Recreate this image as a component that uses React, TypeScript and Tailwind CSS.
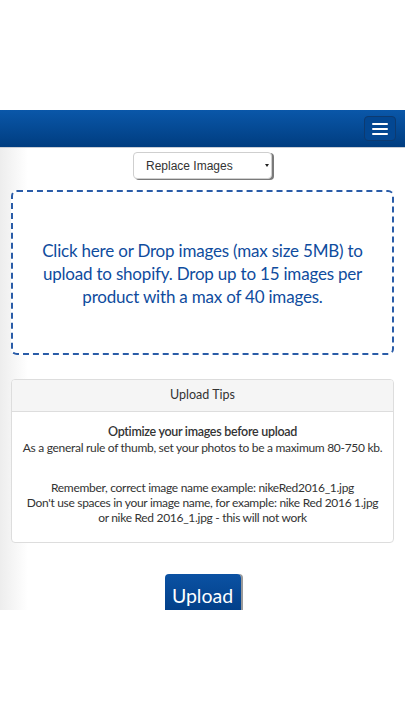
const ubuntuLike = { fontFamily: "Lato, 'Noto Sans', sans-serif" };

function NavBar() {
  return (
    <div className="h-[38px] flex items-center justify-end pr-[9px] bg-[linear-gradient(to_bottom,#0a57a9,#003d80)] border-b border-[#c9ced6]">
      <div className="w-[32px] h-[25px] rounded-[4px] border border-[#0d3a70] bg-[#034792] flex flex-col items-center justify-center gap-[3px]">
        <span className="block w-[16px] h-[2px] bg-white rounded-sm" />
        <span className="block w-[16px] h-[2px] bg-white rounded-sm" />
        <span className="block w-[16px] h-[2px] bg-white rounded-sm" />
      </div>
    </div>
  );
}

function Select() {
  return (
    <div className="mx-auto w-[139px] h-[27px] rounded-[4px] border border-[#cfcfcf] bg-white shadow-[2px_1px_0_#7a7a7a] flex items-center pl-[12px] pr-[2px]">
      <span className="text-[12px] text-[#333] flex-1" style={{ fontFamily: "'Liberation Sans', Arial, sans-serif" }}>
        Replace Images
      </span>
      <span className="block w-0 h-0 border-l-[2.5px] border-r-[2.5px] border-t-[3px] border-l-transparent border-r-transparent border-t-[#222]" />
    </div>
  );
}

export default function App() {
  return (
    <div className="w-[405px] h-[720px] bg-white overflow-hidden" style={ubuntuLike}>
      <div className="h-[110px]" />
      <NavBar />
      <div className="h-[462px] overflow-hidden px-[11px] pt-[4px] bg-[linear-gradient(to_right,#ededed_0px,#ffffff_28px)]">
        <Select />
        <div className="mt-[11px] h-[165px] rounded-[6px] border-2 border-dashed border-[#2a5ca8] bg-white flex items-center justify-center px-[14px] pt-[2px]">
          <p className="text-center text-[17px] leading-[23px] tracking-[-0.2px] text-[#0f4c9e]">
            Click here or Drop images (max size 5MB) to upload to shopify. Drop up to 15 images per product with a max of 40 images.
          </p>
        </div>
        <div className="mt-[24px] h-[164px] rounded-[4px] border border-[#dddddd] bg-white overflow-hidden">
          <div className="h-[32px] bg-[#f5f5f5] border-b border-[#dddddd] flex items-center justify-center text-[12.5px] text-[#333]">
            Upload Tips
          </div>
          <div className="pt-[12px] text-center text-[12px] tracking-[-0.3px] text-[#333]">
            <p className="leading-[16px]">
              <span className="font-semibold text-[12.5px]">Optimize your images before upload</span>
              <br />
              As a general rule of thumb, set your photos to be a maximum 80-750 kb.
            </p>
            <p className="mt-[24px] leading-[15px]">
              Remember, correct image name example: nikeRed2016_1.jpg
              <br />
              Don't use spaces in your image name, for example: nike Red 2016 1.jpg
              <br />
              or nike Red 2016_1.jpg - this will not work
            </p>
          </div>
        </div>
        <div className="mt-[31px] flex justify-center">
          <button className="w-[76px] h-[44px] rounded-[4px] bg-[linear-gradient(to_bottom,#0b52a3,#003c84)] shadow-[2px_0_0_#9a9a9a] text-white text-[19.5px] pb-[1px]">
            Upload
          </button>
        </div>
      </div>
    </div>
  );
}
